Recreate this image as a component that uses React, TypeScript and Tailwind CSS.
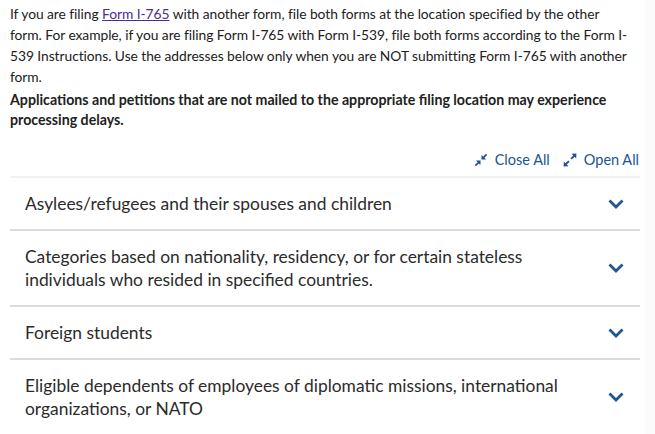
import React from 'react';

const items = [
  'Asylees/refugees and their spouses and children',
  'Categories based on nationality, residency, or for certain stateless individuals who resided in specified countries.',
  'Foreign students',
  'Eligible dependents of employees of diplomatic missions, international organizations, or NATO',
];

function CloseIcon() {
  return (
    <svg viewBox="0 0 14 14" className="h-[14px] w-[14px]" fill="currentColor">
      {/* top-right arrow pointing in */}
      <path d="M13.2 2 12 0.8 9.2 3.6 7.6 2 7.4 6.6 12 6.4 10.4 4.8Z" />
      {/* bottom-left arrow pointing in */}
      <path d="M0.8 12 2 13.2 4.8 10.4 6.4 12 6.6 7.4 2 7.6 3.6 9.2Z" />
    </svg>
  );
}

function OpenIcon() {
  return (
    <svg viewBox="0 0 14 14" className="h-[14px] w-[14px]" fill="currentColor">
      <path d="M13.4 0.6 8.6 0.8 10.2 2.4 7.4 5.2 8.8 6.6 11.6 3.8 13.2 5.4Z" />
      <path d="M0.6 13.4 5.4 13.2 3.8 11.6 6.6 8.8 5.2 7.4 2.4 10.2 0.8 8.6Z" />
    </svg>
  );
}

function Chevron() {
  return (
    <svg viewBox="0 0 16 10" className="h-[10px] w-[16px] shrink-0 text-[#205493]" fill="none" stroke="currentColor" strokeWidth={2.8}>
      <path d="M1.5 1.5 8 8l6.5-6.5" />
    </svg>
  );
}

export default function App() {
  return (
    <div className="flex h-[434px] w-[655px] overflow-hidden bg-white text-[#212121]" style={{ fontFamily: 'Lato, "Noto Sans", sans-serif' }}>
      <div className="w-[645px] shrink-0 pl-[10px] pr-[5px] pt-[3px]">
        <p className="whitespace-nowrap text-[13.8px] leading-[21px] tracking-[-0.05px]">
          <span className="block">
            If you are filing <a className="text-[#4c2c92] underline">Form I-765</a> with another form, file both forms at the location specified by the other
          </span>
          <span className="block">form. For example, if you are filing Form I-765 with Form I-539, file both forms according to the Form I-</span>
          <span className="block">539 Instructions. Use the addresses below only when you are NOT submitting Form I-765 with another</span>
          <span className="block">form.</span>
        </p>
        <p className="mt-[3px] text-[14.2px] font-bold leading-[20px]">
          Applications and petitions that are not mailed to the appropriate filing location may experience processing delays.
        </p>

        <div className="mt-[20px] flex items-center justify-end gap-[13px] pr-[1px] text-[14.5px] leading-[20px] text-[#205493]">
          <span className="flex items-center gap-[7px]">
            <CloseIcon />
            Close All
          </span>
          <span className="flex items-center gap-[7px]">
            <OpenIcon />
            Open All
          </span>
        </div>

        <div className="mt-[6px] border-t-2 border-[#f1f1f1]">
          {items.map((t, i) => (
            <div
              key={t}
              className={`flex items-center justify-between gap-4 py-[14px] pl-[15px] pr-[16px] ${i < items.length - 1 ? 'border-b-2 border-[#dcdcdc]' : ''}`}
            >
              <span className="max-w-[560px] text-[17.4px] leading-[23px] text-[#2b2b2b]">{t}</span>
              <Chevron />
            </div>
          ))}
        </div>
      </div>
      <div className="flex-1 bg-[#fbfbfb]" />
    </div>
  );
}
